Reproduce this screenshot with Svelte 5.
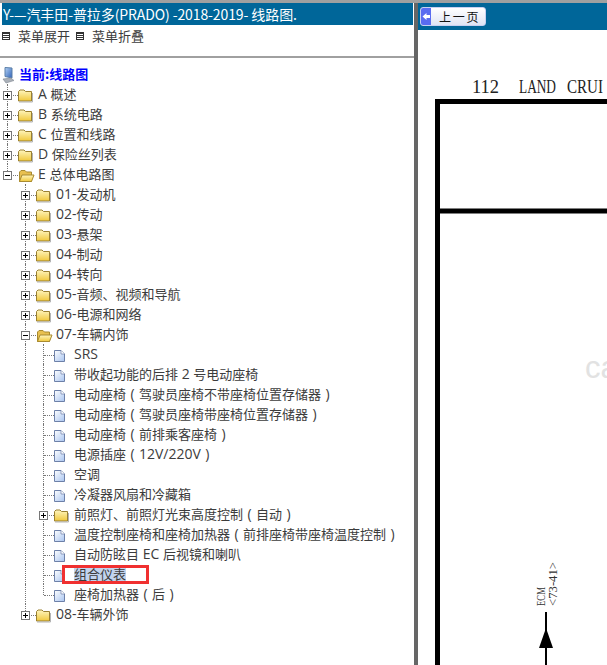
<script>
  const closed = (label) => ({ label, open: false, folder: true });
  const doc = (label) => ({ label });

  const tree = [
    closed('A 概述'),
    closed('B 系统电路'),
    closed('C 位置和线路'),
    closed('D 保险丝列表'),
    {
      label: 'E 总体电路图', folder: true, open: true, children: [
        closed('01-发动机'),
        closed('02-传动'),
        closed('03-悬架'),
        closed('04-制动'),
        closed('04-转向'),
        closed('05-音频、视频和导航'),
        closed('06-电源和网络'),
        {
          label: '07-车辆内饰', folder: true, open: true, children: [
            doc('SRS'),
            doc('带收起功能的后排 2 号电动座椅'),
            doc('电动座椅(驾驶员座椅不带座椅位置存储器)'),
            doc('电动座椅(驾驶员座椅带座椅位置存储器)'),
            doc('电动座椅(前排乘客座椅)'),
            doc('电源插座(12V/220V)'),
            doc('空调'),
            doc('冷凝器风扇和冷藏箱'),
            closed('前照灯、前照灯光束高度控制(自动)'),
            doc('温度控制座椅和座椅加热器(前排座椅带座椅温度控制)'),
            doc('自动防眩目 EC 后视镜和喇叭'),
            { label: '组合仪表', selected: true },
            doc('座椅加热器(后)')
          ]
        },
        closed('08-车辆外饰')
      ]
    }
  ];

  // flatten into rows, guides = which ancestor levels still draw a line
  function flatten(nodes, guides = []) {
    let out = [];
    nodes.forEach((n, i) => {
      const last = i === nodes.length - 1;
      out.push({ ...n, guides, last });
      if (n.open) out = out.concat(flatten(n.children, [...guides, !last]));
    });
    return out;
  }
  const rows = flatten(tree);

  // latin runs and brackets get their own font
  function pieces(text) {
    return text.split(/([()]|[A-Za-z0-9\/\- ]+)/).filter(Boolean).map((t) => ({
      t,
      kind: /[()]/.test(t) ? 'par' : /^[A-Za-z0-9\/\- ]+$/.test(t) ? 'lat' : 'cjk'
    }));
  }
</script>

<div class="page">
  <aside class="left">
    <h1 class="title">Y-—汽丰田-普拉多(PRADO) -2018-2019- 线路图.</h1>
    <div class="menu">
      <span class="menu-icon"></span><span class="menu-text">菜单展开</span>
      <span class="menu-icon"></span><span class="menu-text">菜单折叠</span>
    </div>
    <div class="tree">
      <div class="row root">
        <svg class="cell" width="18" height="20" viewBox="0 0 18 20">
          <defs>
            <linearGradient id="pc" x1="0" x2="1" y1="0" y2="1">
              <stop offset="0" stop-color="#b4d2f4" />
              <stop offset="1" stop-color="#2f62b8" />
            </linearGradient>
          </defs>
          <path d="M5 3.5 L12 4 L12 14 L5 12.5 Z" fill="url(#pc)" stroke="#5b7fa8" />
          <path d="M3 15 L11 14 L14 16.5 L6 19 Z" fill="#aab0b8" stroke="#7d8790" stroke-width="0.6" />
        </svg>
        <span class="label root-label">当前:线路图</span>
      </div>
      {#each rows as r}
        <div class="row">
          {#each r.guides as g}
            <span class="cell" class:vline={g}></span>
          {/each}
          <span class="cell join" class:end={r.last}>
            {#if r.folder}
              <span class="box">
                <i class="h"></i>
                {#if !r.open}<i class="v"></i>{/if}
              </span>
            {/if}
          </span>
          {#if r.folder}
            <svg class="cell" width="18" height="20" viewBox="0 0 18 20">
              <defs>
                <linearGradient id="fold" x1="0" x2="0" y1="0" y2="1">
                  <stop offset="0" stop-color="#fff6c0" />
                  <stop offset="1" stop-color="#f0c83c" />
                </linearGradient>
              </defs>
              {#if r.open}
                <path d="M1.5 17.5 V8 L3 6.5 H7 L8.5 8 H13.5 V17.5 Z" fill="#e8c050" stroke="#a88a30" />
                <path d="M1.5 17.5 L4 11 H16 L13.5 17.5 Z" fill="url(#fold)" stroke="#a88a30" />
              {:else}
                <path d="M0.5 17 V7.5 L2 6 H6 L7.5 7.5 H13.5 V17 Z" fill="url(#fold)" stroke="#9a8030" />
                <path d="M1 18 H14.5 V9" fill="none" stroke="#b4b4b4" />
              {/if}
            </svg>
          {:else}
            <svg class="cell" width="18" height="20" viewBox="0 0 18 20">
              <defs>
                <linearGradient id="page" x1="0" x2="1" y1="0" y2="1">
                  <stop offset="0" stop-color="#ffffff" />
                  <stop offset="1" stop-color="#a8c4f0" />
                </linearGradient>
              </defs>
              <path d="M0.5 6.5 H7 L10.5 10 V17.5 H0.5 Z" fill="url(#page)" stroke="#6d80a8" />
              <path d="M7 6.5 V10 H10.5" fill="#fff" stroke="#6d80a8" stroke-width="0.7" />
            </svg>
          {/if}
          <span class="label" class:selected={r.selected}>
            {#each pieces(r.label) as p}<span class={p.kind}>{p.t}</span>{/each}
          </span>
        </div>
      {/each}
      <div class="marker"></div>
    </div>
  </aside>

  <div class="divider"></div>

  <main class="right">
    <div class="toolbar">
      <button class="prev">
        <span class="arrow">
          <svg width="10" height="17" viewBox="0 0 10 17">
            <path d="M1.5 8.5 L5.5 5 V7 H9 V10 H5.5 V12 Z" fill="#fff" />
          </svg>
        </span>
        <span class="prev-text">上 一 页</span>
      </button>
    </div>
    <svg class="sheet" width="189" height="635" viewBox="418 30 189 635">
      <text x="472" y="93" class="head" textLength="27" lengthAdjust="spacingAndGlyphs">112</text>
      <text x="519" y="93" class="head" textLength="37" lengthAdjust="spacingAndGlyphs">LAND</text>
      <text x="567" y="93" class="head" textLength="36" lengthAdjust="spacingAndGlyphs">CRUI</text>
      <path d="M437.5 665 V101.5 H607 M437.5 211 H607" fill="none" stroke="#000" stroke-width="5" />
      <text x="0" y="0" class="watermark" transform="translate(585 378)">ca</text>
      <text class="note" transform="translate(545 606) rotate(-90)" textLength="19" lengthAdjust="spacingAndGlyphs">ECM</text>
      <text class="note" transform="translate(557 606) rotate(-90)" textLength="44" lengthAdjust="spacingAndGlyphs">&lt;73-41&gt;</text>
      <path d="M546 612 V665" stroke="#000" stroke-width="2" />
      <path d="M546 628 L553 648 H539 Z" fill="#000" />
    </svg>
  </main>
</div>

<style>
  :global(body) {
    margin: 0;
    background: #fff;
  }
  .page {
    display: flex;
    width: 607px;
    height: 665px;
    overflow: hidden;
    border-top: 3px solid #a0a0a0;
    box-sizing: border-box;
    font-family: "Noto Sans CJK SC", "Liberation Sans", sans-serif;
    color: #3c3c3c;
  }
  .left {
    width: 414px;
    flex: none;
    padding-left: 2px;
    box-sizing: border-box;
  }
  .title {
    margin: 0 1px 0 0;
    height: 22px;
    padding-left: 1px;
    background: #006699;
    color: #fff;
    font-size: 14px;
    font-weight: 400;
    line-height: 22px;
    letter-spacing: -0.1px;
    white-space: nowrap;
  }
  .menu {
    display: flex;
    align-items: center;
    height: 33px;
    padding-bottom: 10px;
    box-sizing: border-box;
    border-bottom: 2px solid #a0a0a0;
    margin-left: -2px;
    font-size: 13px;
  }
  .menu-icon {
    width: 6px;
    height: 6px;
    margin-left: 2px;
    border: 1px solid #333;
    background: repeating-linear-gradient(#333 0 1px, #fff 1px 2px);
    flex: none;
  }
  .menu-text {
    margin-left: 8px;
    margin-right: 4px;
  }
  .tree {
    position: relative;
    margin-left: -2px;
    padding-top: 6px;
  }
  .row {
    display: flex;
    height: 20px;
    align-items: center;
    white-space: nowrap;
  }
  .cell {
    position: relative;
    display: block;
    width: 18px;
    height: 20px;
    flex: none;
  }
  .vline::before,
  .join::before {
    content: "";
    position: absolute;
    left: 7px;
    top: 0;
    bottom: 0;
    border-left: 1px dotted #777;
  }
  .join.end::before {
    bottom: 9px;
  }
  .join::after {
    content: "";
    position: absolute;
    left: 8px;
    right: 0;
    top: 11px;
    border-top: 1px dotted #777;
  }
  .box {
    position: absolute;
    z-index: 1;
    left: 3px;
    top: 7px;
    width: 7px;
    height: 7px;
    background: #fff;
    border: 1px solid #777;
  }
  .box .h {
    position: absolute;
    left: 1px;
    top: 3px;
    width: 5px;
    height: 1px;
    background: #000;
  }
  .box .v {
    position: absolute;
    left: 3px;
    top: 1px;
    width: 1px;
    height: 5px;
    background: #000;
  }
  .label {
    margin-left: 2px;
    font-size: 13px;
    line-height: 16px;
  }
  .lat {
    font-family: "Open Sans", sans-serif;
    font-size: 14px;
  }
  .par {
    display: inline-block;
    width: 13px;
    text-align: center;
    font-family: "Open Sans", sans-serif;
    font-size: 14px;
    line-height: 16px;
  }
  .root-label {
    color: #0000ff;
    font-weight: 700;
    margin-left: 1px;
  }
  .selected {
    background: #c2d4ee;
  }
  .marker {
    position: absolute;
    left: 62px;
    top: 507px;
    width: 81px;
    height: 13px;
    border: 3px solid #f03030;
  }
  .divider {
    width: 4px;
    flex: none;
    background: #666;
  }
  .right {
    flex: 1;
    min-width: 0;
    position: relative;
  }
  .toolbar {
    height: 27px;
    background: #006699;
    padding: 4px 0 0 2px;
    box-sizing: border-box;
  }
  .prev {
    display: flex;
    width: 66px;
    height: 19px;
    padding: 0;
    border: 1px solid #c8d0f0;
    border-radius: 3px;
    background: linear-gradient(#ffffff, #dfe4f4);
    align-items: center;
    font-family: "Noto Sans CJK SC", sans-serif;
    font-size: 12px;
    word-spacing: -1px;
    color: #111;
    overflow: hidden;
  }
  .arrow {
    display: block;
    width: 10px;
    height: 17px;
    background: #5a6cf0;
    flex: none;
  }
  .arrow svg {
    display: block;
  }
  .prev-text {
    margin-left: 8px;
  }
  .sheet {
    position: absolute;
    left: 0;
    top: 27px;
    display: block;
  }
  .head {
    font-family: "Liberation Serif", serif;
    font-size: 18px;
    fill: #222;
  }
  .note {
    font-family: "Liberation Serif", serif;
    font-size: 13px;
    fill: #333;
  }
  .watermark {
    font-family: "Liberation Sans", sans-serif;
    font-size: 31px;
    fill: #e2e2e2;
  }
</style>
